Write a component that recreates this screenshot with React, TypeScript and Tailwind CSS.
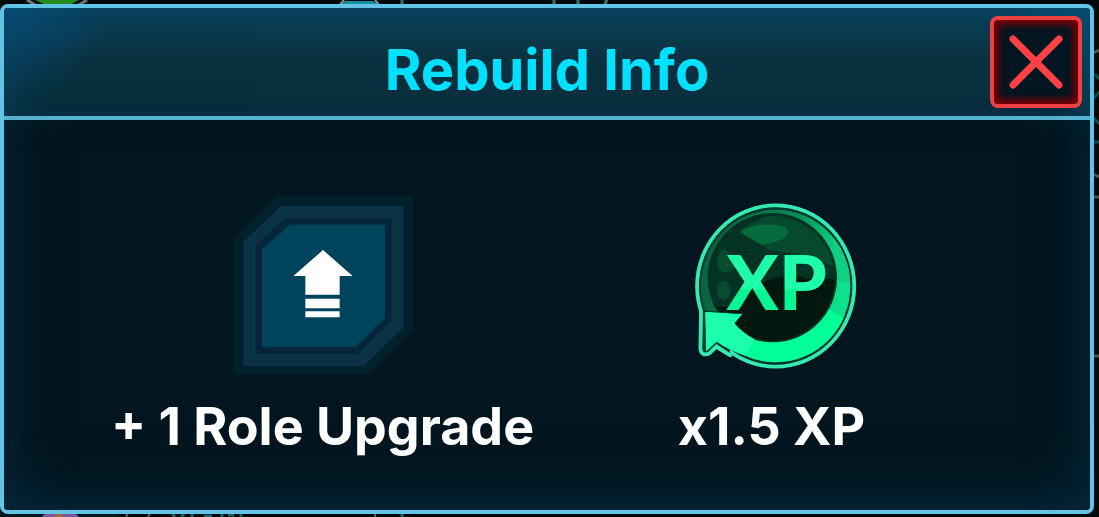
import type { ReactNode } from 'react';

function CloseIcon() {
    return (
        <svg className="w-[54px] h-[54px]" viewBox="0 0 54 54" fill="none" stroke="#ff4145" strokeWidth="7" strokeLinecap="round" aria-hidden="true">
            <path d="M4 4l46 46M50 4L4 50" />
        </svg>
    );
}

function UpgradeIcon() {
    return (
        <svg className="w-[180px] h-[180px]" viewBox="36 32 540 540" aria-hidden="true">
            {/* Nested plates with two cut corners */}
            <path d="M168 33H576V440L446 570H36V160Z" fill="#00202b" />
            <path d="M180 65H548V428L428 546H67V172Z" fill="#0a3144" />
            <path d="M192 102H511V410L412 508H104V187Z" fill="#05263a" />
            <path d="M206 121H492V402L405 489H123V194Z" fill="#00435c" />
            {/* Arrow */}
            <path d="M306 197L395 275H356V331H253V275H217Z" fill="#fff" />
            <path d="M253 343H356V372H253ZM253 381H356V399H253Z" fill="#fff" />
        </svg>
    );
}

function XpIcon() {
    return (
        <svg className="w-[180px] h-[180px]" viewBox="6 18 540 540" aria-hidden="true">
            <defs>
                <linearGradient id="ring" x1="0" y1="0.3" x2="1" y2="0.5">
                    <stop offset="0.1" stopColor="#08653f" />
                    <stop offset="0.55" stopColor="#078a55" />
                    <stop offset="0.9" stopColor="#0fe08c" />
                </linearGradient>
                <linearGradient id="letters" x1="0" y1="0" x2="0" y2="1">
                    <stop offset="0.6" stopColor="#1fffa9" />
                    <stop offset="0.61" stopColor="#06f794" />
                </linearGradient>
                <clipPath id="orb">
                    <circle cx="277" cy="268" r="187" />
                </clipPath>
                <clipPath id="body">
                    <ellipse cx="287" cy="291" rx="224" ry="229" />
                </clipPath>
            </defs>
            {/* Outline with the tail of the arrow */}
            <g stroke="#36e8b4" strokeWidth="13" strokeLinejoin="round">
                <ellipse cx="287" cy="291" rx="235" ry="241" />
                <path d="M64 362L62 480Q66 502 88 492L109 472L150 498V362Z" />
            </g>
            <g fill="#04382a">
                <ellipse cx="287" cy="291" rx="230" ry="236" />
                <path d="M69 362L67 480Q69 495 85 488L109 464L150 492V362Z" />
            </g>
            {/* Crescent, brighter towards the bottom */}
            <g clipPath="url(#body)">
                <rect x="50" y="50" width="480" height="490" fill="url(#ring)" />
                <path d="M440 180L530 150V280H440Z" fill="#10cf80" />
                <path d="M430 350L530 410V530H60V400Z" fill="#00ff96" />
            </g>
            {/* Dark orb */}
            <circle cx="277" cy="266" r="194" fill="#033323" />
            <g clipPath="url(#orb)">
                <path d="M70 60H490V470H70Z" fill="#02180f" />
                <path d="M70 60H490V270H390Q310 245 240 285L140 355L70 350Z" fill="#033324" />
                <path d="M185 120L270 75L500 60V265Q440 200 270 185Z" fill="#05492f" />
                <path d="M180 130C215 100 320 98 324 126C326 148 286 162 245 168Z" fill="#066b3c" />
                <path d="M130 180Q102 210 116 240Q132 262 164 236L184 216Z" fill="#064d30" />
                <ellipse cx="131" cy="304" rx="20" ry="28" fill="#064d30" />
            </g>
            {/* Arrow head */}
            <path d="M78 488L74 367L188 375L163 403" fill="#1bffae" stroke="#04382a" strokeWidth="4" />
            <path d="M78 486L76 369L186 376L163 403Q190 434 224 451L196 500Q150 486 110 458Z" fill="#1bffae" />
            <text x="290" y="362" textAnchor="middle" fontSize="230" fontWeight="900" fill="url(#letters)" className="font-['Lato','Liberation_Sans',sans-serif]">
                XP
            </text>
        </svg>
    );
}

function Reward({ icon, label }: { icon: ReactNode; label: string }) {
    return (
        <li className="flex flex-col items-center gap-5">
            {icon}
            <span className="text-[52px] leading-16 font-bold text-white whitespace-nowrap">{label}</span>
        </li>
    );
}

/* Parts of the game map that stay visible round the dialog */
function MapEdges() {
    return (
        <>
            <svg className="absolute top-0 left-0 w-[620px] h-2" viewBox="0 0 620 8" fill="none" aria-hidden="true">
                <path d="M35 0H79L70 5H46Z" fill="#278b20" />
                <path d="M27 0L37 6M87 0L77 6" stroke="#6d7779" strokeWidth="3" />
                <path d="M345 1H373L381 6H340Z" fill="#168c9e" />
                <path d="M344 0L339 6M375 0L380 6" stroke="#8a9294" strokeWidth="2" />
                <path d="M402 0V6M554 0V6M578 0V6M607 0L604 6" stroke="#387078" strokeWidth="3" />
            </svg>
            <svg className="absolute bottom-0 left-0 w-[420px] h-1" viewBox="0 0 420 4" fill="none" aria-hidden="true">
                <path d="M0 0H120V4H0Z" fill="#001722" />
                <path d="M45 0H75L79 4H42Z" fill="#7b5599" />
                <path d="M55 0H62V4H55Z" fill="#a3683e" />
                <path d="M128 0L126 4M150 0L148 4M375 0V4" stroke="#5b6264" strokeWidth="2" />
                <path d="M172 1L175 4M184 1L181 4M192 1V4M204 3H212M222 1V4M228 2H234M241 1V4M402 0V4" stroke="#17616b" strokeWidth="3" />
            </svg>
            <svg className="absolute top-0 right-0 w-2 h-[370px]" viewBox="0 0 8 370" fill="none" aria-hidden="true">
                <path d="M2 53L8 50M2 174L8 177M2 197H8M2 356H8" stroke="#4b5254" strokeWidth="3" />
                <path d="M4 74L8 79M3 98L8 92M3 118L8 124M3 142H8" stroke="#0b4b50" strokeWidth="3" />
            </svg>
        </>
    );
}

export default function App() {
    return (
        <main className="relative flex min-h-screen bg-[#00080c] pt-1 pr-[5px] pb-[3px] font-['Inter','Liberation_Sans',sans-serif]">
            <MapEdges />
            <section
                role="dialog"
                aria-labelledby="dialog-title"
                className="relative flex flex-1 flex-col overflow-hidden rounded-lg border-4 border-[#62c3e4] bg-[#03151e]"
            >
                <header className="relative flex items-center justify-center border-b-4 border-[#56b0d0] bg-linear-to-b from-[#0a425c] via-[#09313f] to-[#092c3d] pt-7 pb-3">
                    <div className="absolute inset-0 bg-[radial-gradient(circle_at_top_left,#085080_0,transparent_100px),radial-gradient(circle_at_top_right,#085080_0,transparent_100px)] opacity-80 shadow-[inset_30px_0_40px_-30px_#0a4a68,inset_-30px_0_40px_-30px_#0a4a68]" />
                    <h1 id="dialog-title" className="relative text-[56px] leading-[68px] font-bold text-[#00e1ff]">
                        Rebuild Info
                    </h1>
                    <button
                        type="button"
                        aria-label="Close"
                        className="absolute top-2 right-2 flex size-[92px] items-center justify-center rounded-lg border-4 border-[#ee4042] bg-[#03151f] shadow-[inset_0_0_6px_5px_#760006]"
                    >
                        <CloseIcon />
                    </button>
                </header>
                <ul className="grid flex-1 grid-cols-2 content-center px-[94px] pt-6 shadow-[inset_0_-40px_60px_-30px_#04283b,inset_40px_0_60px_-40px_#04283b,inset_-40px_0_60px_-40px_#04283b]">
                    <Reward icon={<UpgradeIcon />} label="+ 1 Role Upgrade" />
                    <Reward icon={<XpIcon />} label="x1.5 XP" />
                </ul>
            </section>
        </main>
    );
}
